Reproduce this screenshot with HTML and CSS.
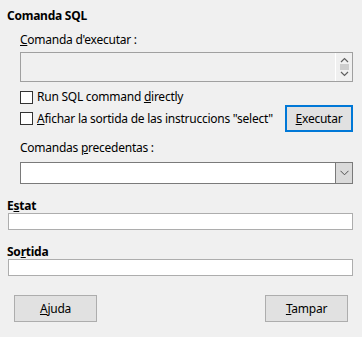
FILE: index.html
```html
<!DOCTYPE html>
<html lang="ca">
<head>
    <meta charset="UTF-8">
    <meta name="viewport" content="width=device-width, initial-scale=1.0">
    <title>Comanda SQL</title>
    <link rel="stylesheet" href="styles.css">
</head>
<body>
    <div class="dialog">
        <!-- Command section -->
        <div class="section-title">Comanda SQL</div>
        <div class="section-body">
            <div class="label"><u>C</u>omanda d'executar :</div>
            <div class="command-box">
                <div class="command-input"></div>
                <div class="spin">
                    <svg width="9" height="24" viewBox="0 0 9 24">
                        <rect x="0" y="9" width="9" height="6" fill="#cdcdcd"/>
                        <path d="M1 7 L4.5 3.5 L8 7" fill="none" stroke="#606060" stroke-width="1.2"/>
                        <path d="M1 17 L4.5 20.5 L8 17" fill="none" stroke="#606060" stroke-width="1.2"/>
                    </svg>
                </div>
            </div>
            <div class="check-row">
                <span class="checkbox"></span>
                <span>Run SQL command <u>d</u>irectly</span>
            </div>
            <div class="check-row with-button">
                <span class="checkbox"></span>
                <span class="check-text"><u>A</u>fichar la sortida de las instruccions "select"</span>
                <button class="btn btn-default"><u>E</u>xecutar</button>
            </div>
            <div class="label label-history">Comandas <u>p</u>recedentas :</div>
            <div class="combo">
                <div class="combo-field"></div>
                <div class="combo-button">
                    <svg width="9" height="6" viewBox="0 0 9 6">
                        <path d="M0.5 0.8 L4.5 4.8 L8.5 0.8" fill="none" stroke="#505050" stroke-width="1"/>
                    </svg>
                </div>
            </div>
        </div>

        <!-- Status and output -->
        <div class="field-title field-status">E<u>s</u>tat</div>
        <div class="field-box"></div>
        <div class="field-title field-output">So<u>r</u>tida</div>
        <div class="field-box"></div>
    </div>

    <div class="buttons">
        <button class="btn"><u>A</u>juda</button>
        <button class="btn"><u>T</u>ampar</button>
    </div>
</body>
</html>
```

FILE: styles.css
```css
body {
    margin: 0;
    padding: 0;
    font-family: "Noto Sans", sans-serif;
    font-size: 12px;
    line-height: 16px;
    letter-spacing: -0.25px;
    color: #000;
    background-color: #f0f0f0;
}

u {
    text-decoration-thickness: 1px;
    text-underline-offset: 1px;
}

.dialog {
    padding: 8px 9px 0 7px;
}

.section-title {
    font-weight: bold;
}

.section-body {
    padding-left: 13px;
}

.label {
    margin-top: 8px;
    margin-bottom: 4px;
}

.label-history {
    margin-top: 8px;
    margin-bottom: 6px;
}

.command-box {
    display: flex;
    height: 30px;
    box-sizing: border-box;
    border: 1px solid #a0a0a0;
    background-color: #f0f0f0;
}

.command-input {
    flex: 1;
}

.spin {
    width: 16px;
    border-left: 1px solid #ffffff;
    display: flex;
    align-items: center;
    justify-content: center;
}

.check-row {
    display: flex;
    align-items: center;
    gap: 4px;
    margin-top: 7px;
    white-space: nowrap;
}

.check-row.with-button {
    margin-top: 0;
}

.check-text {
    flex: 1;
}

.checkbox {
    flex-shrink: 0;
    width: 13px;
    height: 13px;
    box-sizing: border-box;
    border: 1px solid #333333;
    background-color: #ffffff;
}

.btn {
    width: 83px;
    height: 27px;
    padding: 0;
    box-sizing: border-box;
    border: 1px solid #adadad;
    background-color: #e1e1e1;
    font-family: inherit;
    font-size: 12px;
    letter-spacing: inherit;
    color: #000;
}

.btn-default {
    flex-shrink: 0;
    width: 68px;
    border: 2px solid #0078d7;
}

.combo {
    display: flex;
    height: 22px;
    box-sizing: border-box;
    border: 1px solid #7a7a7a;
    background-color: #ffffff;
}

.combo-field {
    flex: 1;
}

.combo-button {
    width: 16px;
    border-left: 1px solid #7a7a7a;
    background-color: #dadada;
    display: flex;
    align-items: center;
    justify-content: center;
}

.field-title {
    font-weight: bold;
    line-height: 14px;
}

.field-status {
    margin-top: 15px;
}

.field-output {
    margin-top: 15px;
}

.field-box {
    height: 17px;
    box-sizing: border-box;
    margin-left: 1px;
    border: 1px solid #adadad;
    background-color: #ffffff;
}

.buttons {
    display: flex;
    justify-content: space-between;
    padding: 19px 14px 0 14px;
}
```
